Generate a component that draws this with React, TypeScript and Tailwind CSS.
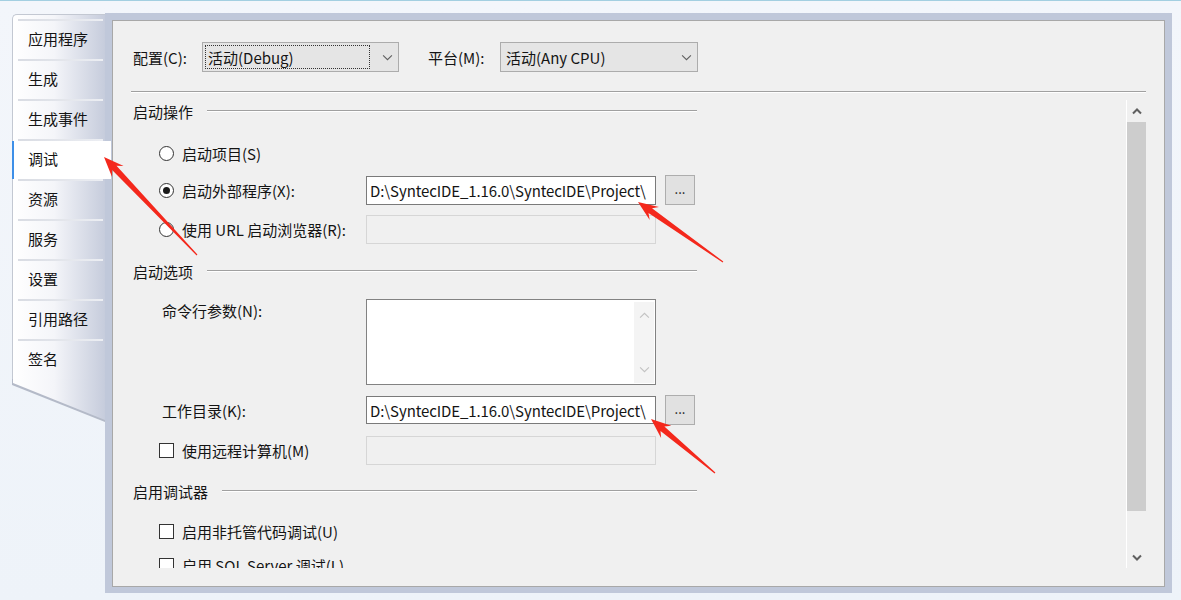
import React from "react";

const TABS = ["应用程序", "生成", "生成事件", "调试", "资源", "服务", "设置", "引用路径", "签名"];

function arrowPoints(tx: number, ty: number, hx: number, hy: number) {
  const dx = hx - tx;
  const dy = hy - ty;
  const L = Math.hypot(dx, dy);
  const ux = dx / L;
  const uy = dy / L;
  const nx = -uy;
  const ny = ux;
  const H = 20;
  const W = 8;
  const neckBack = 15;
  const w = 3;
  const t = 0.6;
  const bx = hx - ux * H;
  const by = hy - uy * H;
  const kx = hx - ux * neckBack;
  const ky = hy - uy * neckBack;
  const p = [
    [tx + nx * t, ty + ny * t],
    [kx + nx * w, ky + ny * w],
    [bx + nx * W, by + ny * W],
    [hx, hy],
    [bx - nx * W, by - ny * W],
    [kx - nx * w, ky - ny * w],
    [tx - nx * t, ty - ny * t],
  ];
  return p.map((q) => `${q[0].toFixed(1)},${q[1].toFixed(1)}`).join(" ");
}

function Chevron({ up = false, className = "", color = "#606060", width = 1 }: { up?: boolean; className?: string; color?: string; width?: number }) {
  return (
    <svg viewBox="0 0 10 6" className={className} fill="none">
      <path d={up ? "M1 5 L5 1 L9 5" : "M1 1 L5 5 L9 1"} stroke={color} strokeWidth={width} />
    </svg>
  );
}

function Combo({ text, w, focus }: { text: string; w: string; focus?: boolean }) {
  return (
    <div className={`${w} h-[30px] bg-[#e5e5e5] border border-[#acacac] flex items-center pl-[2px] pr-[5px]`}>
      <div className={`h-[24px] flex items-center pl-[2px] flex-1 ${focus ? "border border-dotted border-[#333] mr-[12px]" : "border border-transparent"}`}>
        <span className="leading-none">{text}</span>
      </div>
      <Chevron className="w-[11px] h-[7px]" />
    </div>
  );
}

function PathInput({ h = "h-[29px]" }: { h?: string }) {
  return (
    <div className={`w-[290px] ${h} bg-white border border-[#7a7a7a] flex items-center pl-[3px] overflow-hidden whitespace-nowrap`}>
      <span className="leading-none tracking-[-0.1px]">D:\SyntecIDE_1.16.0\SyntecIDE\Project\</span>
    </div>
  );
}

function DisabledInput() {
  return <div className="w-[290px] h-[29px] bg-[#f0f0f0] border border-[#d6d6d6]" />;
}

function BrowseBtn() {
  return (
    <div className="ml-[9px] w-[30px] h-[30px] bg-[#e1e1e1] border border-[#adadad] flex items-center justify-center text-[13px] leading-none pb-[4px]">
      ...
    </div>
  );
}

function Radio({ checked }: { checked?: boolean }) {
  return (
    <div className="w-[15px] h-[15px] rounded-full border border-[#333] bg-white flex items-center justify-center shrink-0">
      {checked && <div className="w-[7px] h-[7px] rounded-full bg-[#1a1a1a]" />}
    </div>
  );
}

function Check() {
  return <div className="w-[15px] h-[15px] border border-[#333] bg-white shrink-0" />;
}

function Heading({ text }: { text: string }) {
  return (
    <div className="h-[22px] w-[564px] flex items-center">
      <span className="leading-none">{text}</span>
      <div className="ml-[14px] flex-1 h-[2px] border-t border-[#a0a0a0] border-b border-b-white" />
    </div>
  );
}

export default function App() {
  return (
    <div className="relative w-[1181px] h-[600px] overflow-hidden bg-[linear-gradient(to_bottom,#f3f6fb,#eef3f9)] border-t border-[#a3cfe1] font-['Noto_Sans_CJK_SC','Noto_Sans',sans-serif] text-[15px] text-[#141414]">
      <div className="flex pt-[12px] pl-[12px]">
        {/* Tab strip */}
        <div className="relative z-10 w-[93px] mt-[1px] flex flex-col">
          <div className="h-[5px] rounded-tl-[5px] border-l border-t border-[#c3c8d2] bg-[linear-gradient(to_right,#ffffff_0%,#f4f5f9_45%,#c6ccdc_100%)]" />
          {TABS.map((t) => {
            const sel = t === "调试";
            return (
              <div
                key={t}
                className="h-[40px] shrink-0 flex flex-col border-l border-[#c3c8d2] bg-[linear-gradient(to_right,#ffffff_0%,#f4f5f9_45%,#c6ccdc_100%)]"
              >
                <div className="h-[2px] ml-[5px] mr-[2px] bg-[linear-gradient(to_right,#d9dce3,#eceef3)]" />
                {sel ? (
                  <div className="ml-[-1px] w-[99px] h-[38px] bg-white border-l-2 border-[#3d8fe8] flex items-center pl-[14px] pb-[3px]">
                    <span className="leading-none">{t}</span>
                  </div>
                ) : (
                  <div className="h-[38px] flex items-center pl-[15px] pb-[3px]">
                    <span className="leading-none">{t}</span>
                  </div>
                )}
              </div>
            );
          })}
          <div className="h-[43px] shrink-0 bg-[#b4bac8] [clip-path:polygon(0_0,100%_0,100%_100%,0_14%)]">
            <div className="h-full bg-[linear-gradient(to_right,#ffffff_0%,#f4f5f9_45%,#c6ccdc_100%)] [clip-path:polygon(1px_0,100%_0,100%_calc(100%-2px),1px_calc(14%-2px))]" />
          </div>
        </div>

        {/* Frame */}
        <div className="w-[1067px] h-[580px] bg-[#c0c8da] pt-[7px] pl-[7px] pr-[7px] pb-[6px]">
          <div className="h-full bg-[#f0f0f0] border border-[#a8a8a8]">
            {/* Top row */}
            <div className="flex items-center h-[30px] mt-[21px] ml-[20px]">
              <div className="w-[69px] leading-none">配置(C):</div>
              <Combo text="活动(Debug)" w="w-[197px]" focus />
              <div className="ml-[29px] w-[72px] leading-none">平台(M):</div>
              <Combo text="活动(Any CPU)" w="w-[198px]" />
            </div>
            <div className="mt-[19px] mx-[18px] h-[2px] border-t border-[#a0a0a0] border-b border-b-white" />

            {/* Scroll area */}
            <div className="mt-[7px] mx-[18px] h-[468px] flex">
              <div className="flex-1 h-[468px] overflow-hidden pl-[2px]">
                <Heading text="启动操作" />
                <div className="mt-[16px] h-[30px] flex items-center pl-[26px]">
                  <Radio />
                  <span className="ml-[8px] leading-none">启动项目(S)</span>
                </div>
                <div className="mt-[7px] h-[30px] flex items-center pl-[26px]">
                  <Radio checked />
                  <span className="ml-[8px] w-[184px] leading-none">启动外部程序(X):</span>
                  <PathInput />
                  <BrowseBtn />
                </div>
                <div className="mt-[9px] h-[30px] flex items-center pl-[26px]">
                  <Radio />
                  <span className="ml-[8px] w-[184px] leading-none">使用 URL 启动浏览器(R):</span>
                  <DisabledInput />
                </div>

                <div className="mt-[16px]">
                  <Heading text="启动选项" />
                </div>
                <div className="mt-[17px] h-[86px] flex pl-[29px]">
                  <div className="w-[204px] h-[22px] flex items-center leading-none">命令行参数(N):</div>
                  <div className="w-[290px] h-[86px] bg-white border border-[#828282] flex justify-end">
                    <div className="w-[20px] mt-[2px] mb-[1px] mr-[1px] bg-[#f4f4f4] flex flex-col items-center justify-between py-[10px]">
                      <Chevron up className="w-[11px] h-[7px]" color="#c2c2c2" />
                      <Chevron className="w-[11px] h-[7px]" color="#c2c2c2" />
                    </div>
                  </div>
                </div>
                <div className="mt-[10px] h-[30px] flex items-center pl-[29px]">
                  <span className="w-[204px] leading-none">工作目录(K):</span>
                  <PathInput h="h-[28px]" />
                  <BrowseBtn />
                </div>
                <div className="mt-[10px] h-[30px] flex items-center pl-[26px]">
                  <Check />
                  <span className="ml-[8px] w-[184px] leading-none">使用远程计算机(M)</span>
                  <DisabledInput />
                </div>

                <div className="mt-[15px]">
                  <Heading text="启用调试器" />
                </div>
                <div className="mt-[18px] h-[22px] flex items-center pl-[26px]">
                  <Check />
                  <span className="ml-[8px] leading-none">启用非托管代码调试(U)</span>
                </div>
                <div className="mt-[12px] h-[22px] flex items-center pl-[26px]">
                  <Check />
                  <span className="ml-[8px] leading-none">启用 SQL Server 调试(L)</span>
                </div>
              </div>

              {/* Scrollbar */}
              <div className="w-[20px] border-l border-white bg-[#f0f0f0] flex flex-col">
                <div className="h-[22px] flex items-center justify-center">
                  <Chevron up className="w-[10px] h-[7px]" color="#606060" width={2} />
                </div>
                <div className="h-[389px] bg-[#cdcdcd]" />
                <div className="flex-1 flex items-end">
                  <div className="h-[22px] w-full flex items-center justify-center">
                    <Chevron className="w-[10px] h-[7px]" color="#606060" width={2} />
                  </div>
                </div>
              </div>
            </div>
          </div>
        </div>
      </div>

      {/* Red annotation arrows */}
      <svg className="absolute left-0 top-0 w-[1181px] h-[600px] pointer-events-none z-20" viewBox="0 0 1181 600">
        <polygon points={arrowPoints(197, 254, 104, 156)} fill="#f4281c" />
        <polygon points={arrowPoints(723, 261, 638, 201)} fill="#f4281c" />
        <polygon points={arrowPoints(715, 472, 651, 418)} fill="#f4281c" />
      </svg>
    </div>
  );
}
